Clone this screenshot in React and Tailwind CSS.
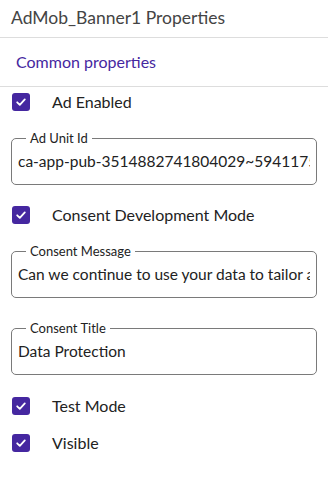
import React from "react"

const font = { fontFamily: "Lato, 'Noto Sans', sans-serif" }

function Check({ label, className = "" }) {
  return (
    <div className={`flex items-center h-[30px] pl-3 ${className}`}>
      <span className="flex items-center justify-center w-[18px] h-[18px] rounded-[3px] bg-[#4527a0]">
        <svg width="12" height="12" viewBox="0 0 12 12" fill="none">
          <path d="M2.2 6.3 L4.8 8.8 L9.8 3.4" stroke="white" strokeWidth="1.8" strokeLinecap="round" strokeLinejoin="round" />
        </svg>
      </span>
      <span className="ml-[22px] text-[16px] text-[#222]">{label}</span>
    </div>
  )
}

function Field({ label, value, className = "" }) {
  return (
    <div className={`relative mx-[11px] h-[47px] rounded-[5px] border border-[#7a7a7a] flex items-center px-[6px] ${className}`}>
      <span className="absolute left-[14px] -top-[9px] px-[4px] bg-white text-[13px] leading-[16px] text-[#222]">{label}</span>
      <span className="whitespace-nowrap overflow-hidden text-[15.5px] text-[#222]">{value}</span>
    </div>
  )
}

export default function App() {
  return (
    <div className="w-[328px] h-[500px] bg-white overflow-hidden" style={font}>
      <div className="h-[38px] flex items-center pl-[11px] text-[17.5px] text-[#444] border-b border-[#ddd]">
        AdMob_Banner1 Properties
      </div>
      <div className="h-[49px] flex items-center pl-4 text-[16px] text-[#4527a0] border-b border-[#ddd]">
        Common properties
      </div>
      <Check label="Ad Enabled" />
      <Field label="Ad Unit Id" value="ca-app-pub-3514882741804029~5941175990" className="mt-[21px]" />
      <Check label="Consent Development Mode" className="mt-[15px]" />
      <Field label="Consent Message" value="Can we continue to use your data to tailor ads for you?" className="mt-[21px]" />
      <Field label="Consent Title" value="Data Protection" className="mt-[30px]" />
      <Check label="Test Mode" className="mt-[16px]" />
      <Check label="Visible" className="mt-[7px]" />
    </div>
  )
}
